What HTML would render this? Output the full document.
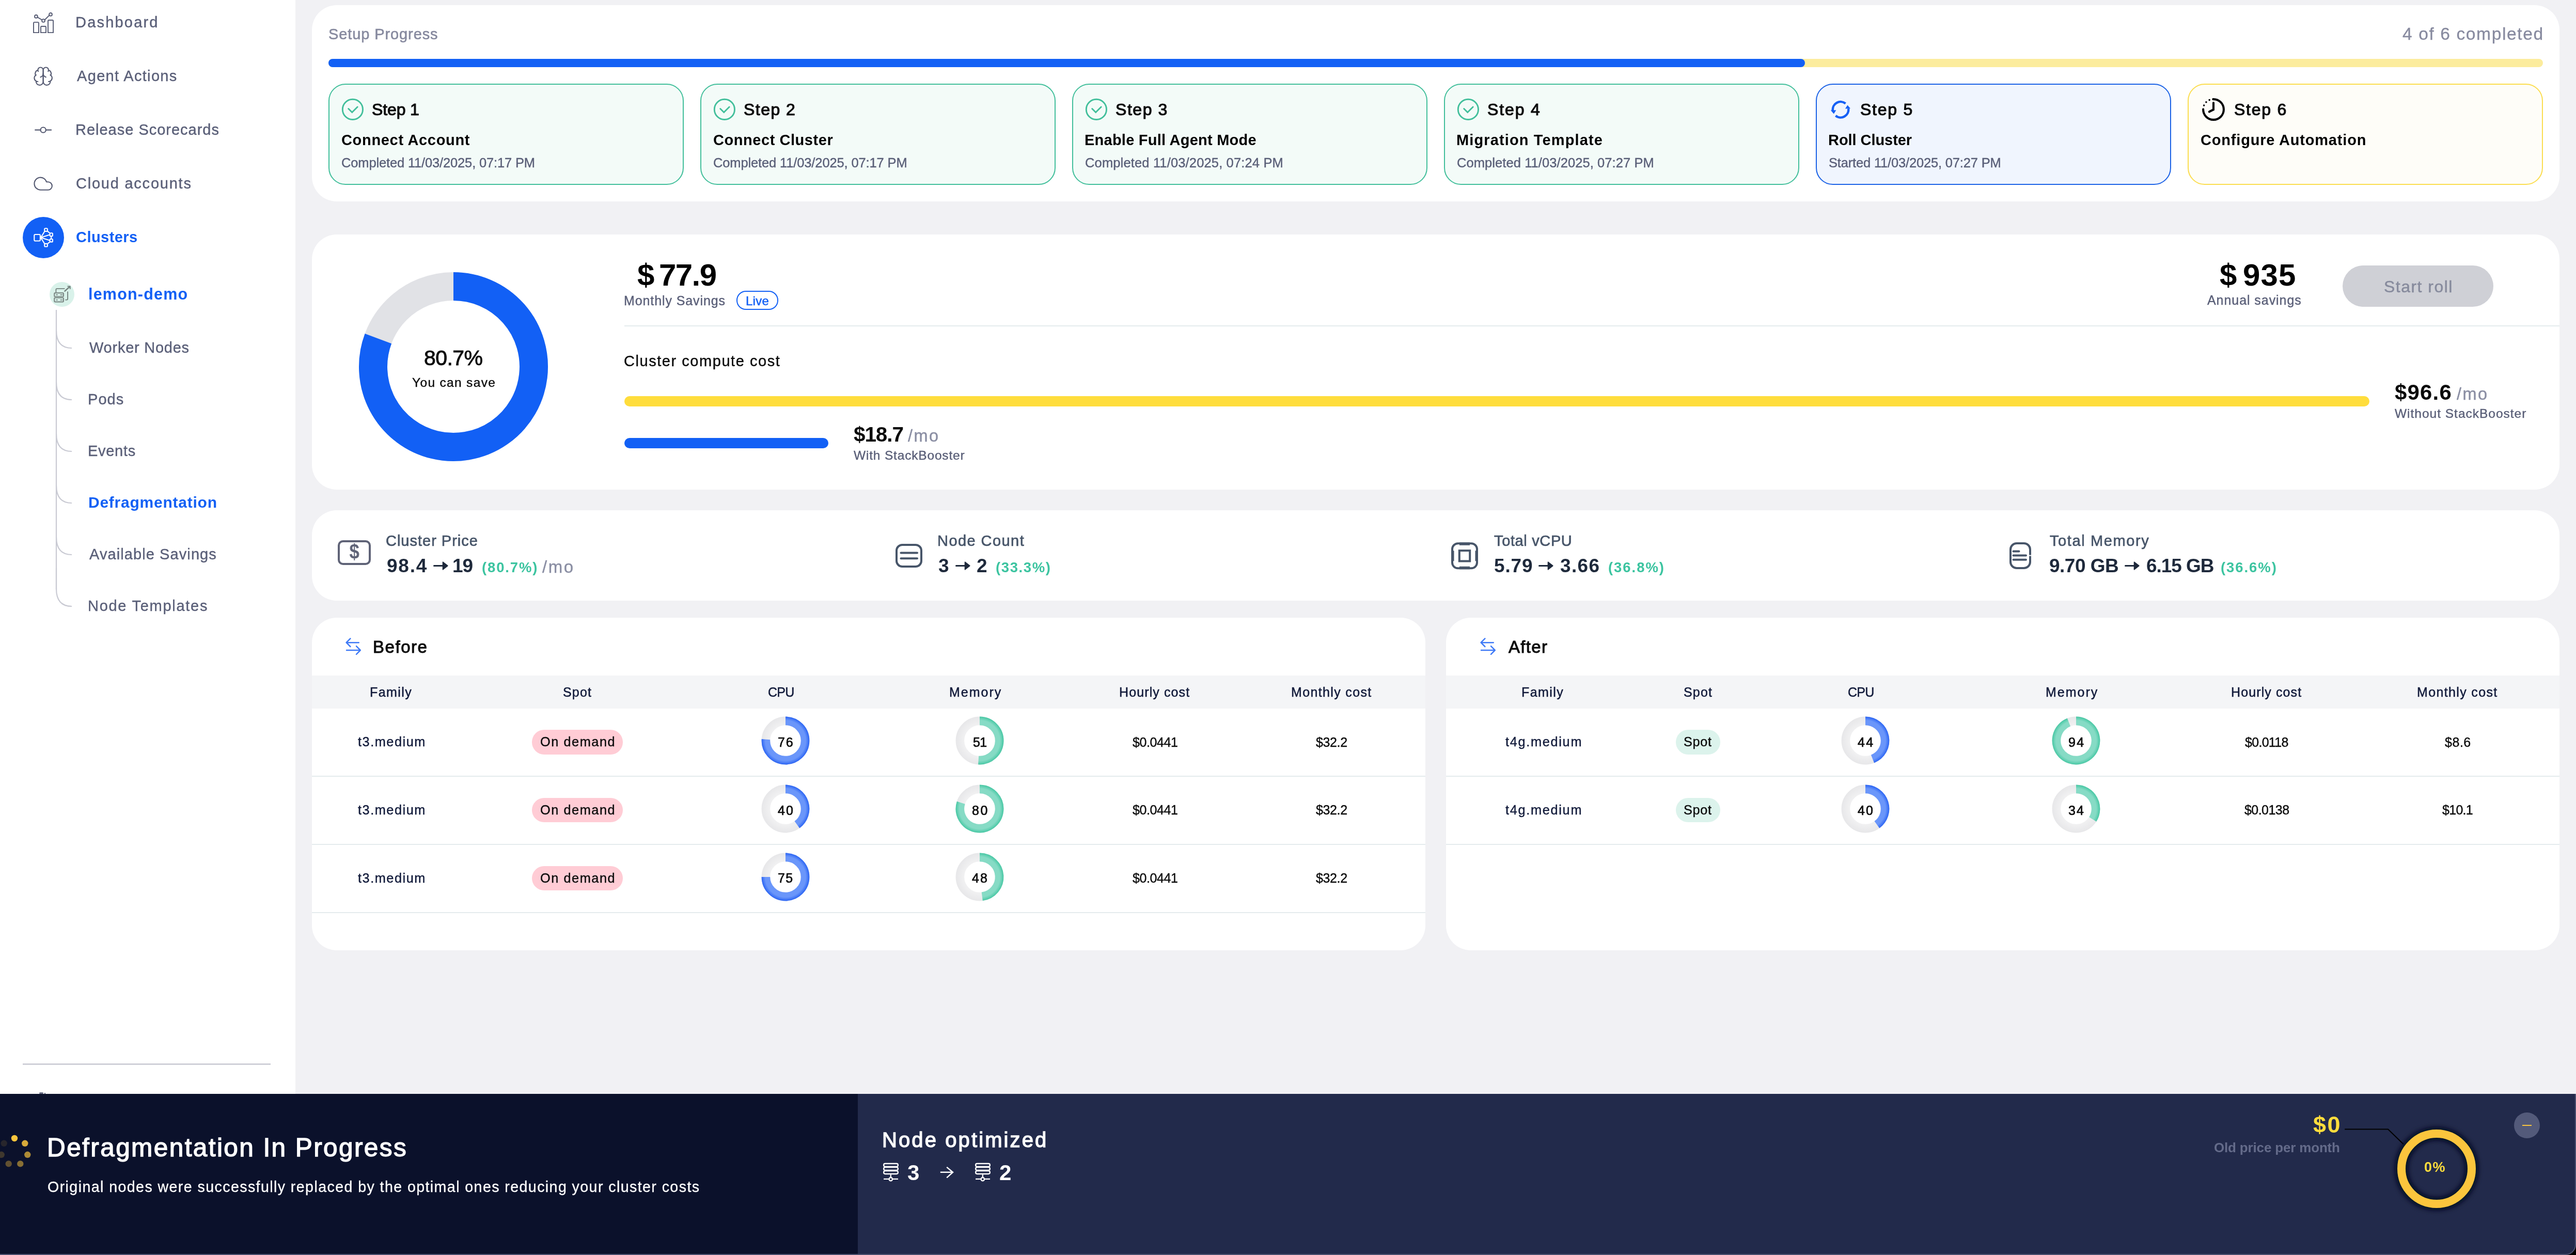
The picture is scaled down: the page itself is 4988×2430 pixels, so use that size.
<!DOCTYPE html>
<html><head><meta charset="utf-8"><title>Defragmentation</title>
<style>
html,body{margin:0;padding:0}
body{width:4988px;height:2430px;overflow:hidden;position:relative;background:#f1f1f4;font-family:"Liberation Sans",sans-serif}
.t{position:absolute;white-space:nowrap;will-change:transform}
.b{position:absolute;box-sizing:border-box}
</style></head><body>
<div class="b" style="left:0px;top:0px;width:572px;height:2118px;background:#ffffff;"></div>
<div class="t" style="left:146.2px;top:29.4px;font-size:29px;line-height:29px;color:#5a5f78;letter-spacing:2.20px;-webkit-text-stroke:0.4px #5a5f78;">Dashboard</div>
<div class="t" style="left:148.5px;top:133.3px;font-size:29px;line-height:29px;color:#5a5f78;letter-spacing:1.33px;-webkit-text-stroke:0.4px #5a5f78;">Agent Actions</div>
<div class="t" style="left:146.2px;top:237.3px;font-size:29px;line-height:29px;color:#5a5f78;letter-spacing:0.99px;-webkit-text-stroke:0.4px #5a5f78;">Release Scorecards</div>
<div class="t" style="left:147.1px;top:341.3px;font-size:29px;line-height:29px;color:#5a5f78;letter-spacing:1.77px;-webkit-text-stroke:0.4px #5a5f78;">Cloud accounts</div>
<div class="t" style="left:147.2px;top:445.3px;font-size:29px;line-height:29px;color:#1260f5;font-weight:700;letter-spacing:0.45px;">Clusters</div>
<div class="t" style="left:171.1px;top:554.0px;font-size:30.5px;line-height:30.5px;color:#1260f5;font-weight:700;letter-spacing:1.21px;">lemon-demo</div>
<div class="t" style="left:172.6px;top:659.2px;font-size:29px;line-height:29px;color:#5a5f78;letter-spacing:0.75px;-webkit-text-stroke:0.4px #5a5f78;">Worker Nodes</div>
<div class="t" style="left:170.3px;top:759.2px;font-size:29px;line-height:29px;color:#5a5f78;letter-spacing:1.07px;-webkit-text-stroke:0.4px #5a5f78;">Pods</div>
<div class="t" style="left:170.3px;top:859.2px;font-size:29px;line-height:29px;color:#5a5f78;letter-spacing:0.71px;-webkit-text-stroke:0.4px #5a5f78;">Events</div>
<div class="t" style="left:170.5px;top:958.3px;font-size:30px;line-height:30px;color:#1260f5;font-weight:700;letter-spacing:0.76px;">Defragmentation</div>
<div class="t" style="left:172.6px;top:1059.2px;font-size:29px;line-height:29px;color:#5a5f78;letter-spacing:1.09px;-webkit-text-stroke:0.4px #5a5f78;">Available Savings</div>
<div class="t" style="left:170.3px;top:1159.2px;font-size:29px;line-height:29px;color:#5a5f78;letter-spacing:1.72px;-webkit-text-stroke:0.4px #5a5f78;">Node Templates</div>
<svg class="b" style="left:107px;top:600px;" width="40" height="580" viewBox="0 0 40 580"><g fill="none" stroke="#c9cad3" stroke-width="2.2"><path d="M2 0V554" /><path d="M2 40Q2 74 32 74" /><path d="M2 140Q2 174 32 174" /><path d="M2 240Q2 274 32 274" /><path d="M2 340Q2 374 32 374" /><path d="M2 440Q2 474 32 474" /><path d="M2 540Q2 574 32 574" /></g></svg>
<div class="b" style="left:100px;top:1141px;width:20px;height:40px;background:#ffffff;"></div>
<svg class="b" style="left:107px;top:1100px;" width="40" height="80" viewBox="0 0 40 80"><path d="M2 0V40Q2 74 32 74" fill="none" stroke="#c9cad3" stroke-width="2.2"/></svg>
<div class="b" style="left:44px;top:420px;width:80px;height:80px;background:#1260f5;border-radius:40px;"></div>
<div class="b" style="left:96px;top:546px;width:48px;height:48px;background:#d9f2ea;border-radius:24px;"></div>
<div class="b" style="left:75.5px;top:2115px;width:8px;height:3px;background:#6b6f85;border-radius:1.5px;"></div>
<div class="b" style="left:85.5px;top:2115.5px;width:2px;height:2.5px;background:#6b6f85;"></div>
<div class="b" style="left:44px;top:2059px;width:480px;height:3px;background:#cfd0d8;"></div>
<svg class="b" style="left:64px;top:24px;" width="40" height="40" viewBox="0 0 40 40"><g fill="none" stroke="#545971" stroke-width="1.900"><path d="M1 39.100V20.600q0-1.500 1.500-1.500h7q1.500 0 1.500 1.500V39.100z"/><path d="M15 39.100V28.500q0-1.500 1.500-1.500h7q1.500 0 1.500 1.500V39.100z"/><path d="M29 39.100V16.500q0-1.500 1.500-1.500h7.100q1.500 0 1.500 1.500V39.100z"/><circle cx="5.900" cy="7.900" r="2.900"/><circle cx="20" cy="16" r="2.900"/><circle cx="34" cy="3.900" r="2.900"/><path d="M8.500 9.400L17.400 14.500M22.500 14.500L31.500 5.600"/></g></svg>
<svg class="b" style="left:63.36px;top:127.36px;" width="43" height="43" viewBox="0 0 25 25"><g fill="none" stroke="#545971" stroke-width="1.220" stroke-linecap="round" stroke-linejoin="round"><path d="M12 5a3 3 0 1 0-5.997.125 4 4 0 0 0-2.526 5.770 4 4 0 0 0 .556 6.588A4 4 0 1 0 12 18Z"/><path d="M12 5a3 3 0 1 1 5.997.125 4 4 0 0 1 2.526 5.770 4 4 0 0 1-.556 6.588A4 4 0 1 1 12 18Z"/><path d="M15 13a4.500 4.500 0 0 1-3-4 4.500 4.500 0 0 1-3 4"/><path d="M17.599 6.500a3 3 0 0 0 .399-1.375"/><path d="M6.003 5.125A3 3 0 0 0 6.401 6.500"/><path d="M3.477 10.896a4 4 0 0 1 .585-.396"/><path d="M19.938 10.500a4 4 0 0 1 .585.396"/><path d="M6 18a4 4 0 0 1-1.967-.516"/><path d="M19.967 17.484A4 4 0 0 1 18 18"/></g></svg>
<svg class="b" style="left:63.36px;top:231.06px;" width="43" height="43" viewBox="0 0 25 25"><g fill="none" stroke="#545971" stroke-width="1.220" stroke-linecap="round" stroke-linejoin="round"><circle cx="12" cy="12" r="3"/><path d="M3 12h6M15 12h6"/></g></svg>
<svg class="b" style="left:63.4px;top:335.1px;" width="43" height="43" viewBox="0 0 25 25"><g fill="none" stroke="#545971" stroke-width="1.220" stroke-linecap="round" stroke-linejoin="round"><path d="M17.500 19H9a7 7 0 1 1 6.710-9h1.790a4.500 4.500 0 1 1 0 9Z"/></g></svg>
<svg class="b" style="left:64px;top:440px;" width="40" height="40" viewBox="0 0 40 40"><g fill="none" stroke="#fff" stroke-width="2.100" stroke-linejoin="round"><rect x="2.300" y="14" width="11.600" height="12.500" rx="2"/><rect x="22.200" y="2.200" width="5.700" height="5.700" rx="1.500"/><rect x="32.600" y="11.300" width="5.300" height="5.900" rx="1.500"/><rect x="32.600" y="22.800" width="5.300" height="5.600" rx="1.500"/><rect x="22.200" y="31.900" width="5.700" height="5.600" rx="1.500"/><path d="M14.900 20.100L22.300 8.300M14.900 20.100L32.300 14.400M14.900 20.100L32.300 25.600M14.900 20.100L22.300 31.700"/><path d="M28.300 7.900L32.600 11.500M35.200 17.200V22.800M32.600 28.300L28.300 31.900"/></g></svg>
<svg class="b" style="left:96px;top:546px;" width="48" height="48" viewBox="0 0 48 48"><g fill="none" stroke="#6f7b78" stroke-width="1.900" stroke-linejoin="round" opacity="0.95"><rect x="9.200" y="21.200" width="17.800" height="7.200" rx="1.200"/><rect x="9.200" y="30.600" width="17.800" height="7.900" rx="1.200"/><path d="M12.200 24.800H16M20.500 24.800H25.500M12.200 34.800H16M20.500 34.800H25.500" stroke-width="1.500"/><path d="M12.400 20V14.900Q12.400 12.900 14.400 12.900H29.400M35.100 18.400V32.600Q35.100 34.600 33.100 34.600H30.300"/><path d="M28.700 18.400L38.800 9.300" stroke-width="2.600"/><path d="M34.500 8.400H39.800V13.700"/></g></svg>
<div class="b" style="left:604px;top:10px;width:4352px;height:380px;background:#ffffff;border-radius:48px;"></div>
<div class="t" style="left:635.7px;top:51.6px;font-size:29px;line-height:29px;color:#878a9f;letter-spacing:0.90px;-webkit-text-stroke:0.6px #878a9f;">Setup Progress</div>
<div class="t" style="left:4651.9px;top:49.2px;font-size:33.6px;line-height:33.6px;color:#878a9f;letter-spacing:1.59px;-webkit-text-stroke:0.3px #878a9f;">4 of 6 completed</div>
<div class="b" style="left:636px;top:114px;width:4288px;height:16px;background:#fcec9d;border-radius:8px;"></div>
<div class="b" style="left:636px;top:114px;width:2859px;height:16px;background:#1260f5;border-radius:8px;"></div>
<div class="b" style="left:636px;top:162px;width:688px;height:195.6px;background:#f3fbf8;border-radius:33px;border:2px solid #42bf9b;"></div>
<svg class="b" style="left:661px;top:190px;" width="44" height="44" viewBox="0 0 44 44"><g fill="none" stroke="#42bf9b" stroke-width="2.9" stroke-linecap="round" stroke-linejoin="round"><circle cx="21.9" cy="21.9" r="19.6"/><path d="M13.700 20.500l7 7.100 10.500-10.600"/></g></svg>
<div class="t" style="left:720.1px;top:196.2px;font-size:32px;line-height:32px;color:#0b0b0b;letter-spacing:-0.12px;-webkit-text-stroke:1.1px #0b0b0b;">Step 1</div>
<div class="t" style="left:660.8px;top:257.2px;font-size:29px;line-height:29px;color:#000000;font-weight:700;letter-spacing:0.68px;">Connect Account</div>
<div class="t" style="left:660.9px;top:302.6px;font-size:25.5px;line-height:25.5px;color:#5a5f78;letter-spacing:-0.15px;-webkit-text-stroke:0.4px #5a5f78;">Completed 11/03/2025, 07:17 PM</div>
<div class="b" style="left:1356px;top:162px;width:688px;height:195.6px;background:#f3fbf8;border-radius:33px;border:2px solid #42bf9b;"></div>
<svg class="b" style="left:1381px;top:190px;" width="44" height="44" viewBox="0 0 44 44"><g fill="none" stroke="#42bf9b" stroke-width="2.9" stroke-linecap="round" stroke-linejoin="round"><circle cx="21.9" cy="21.9" r="19.6"/><path d="M13.700 20.500l7 7.100 10.500-10.600"/></g></svg>
<div class="t" style="left:1440.1px;top:196.2px;font-size:32px;line-height:32px;color:#0b0b0b;letter-spacing:1.45px;-webkit-text-stroke:1.1px #0b0b0b;">Step 2</div>
<div class="t" style="left:1380.8px;top:257.2px;font-size:29px;line-height:29px;color:#000000;font-weight:700;letter-spacing:0.55px;">Connect Cluster</div>
<div class="t" style="left:1380.9px;top:302.6px;font-size:25.5px;line-height:25.5px;color:#5a5f78;letter-spacing:-0.13px;-webkit-text-stroke:0.4px #5a5f78;">Completed 11/03/2025, 07:17 PM</div>
<div class="b" style="left:2076px;top:162px;width:688px;height:195.6px;background:#f3fbf8;border-radius:33px;border:2px solid #42bf9b;"></div>
<svg class="b" style="left:2101px;top:190px;" width="44" height="44" viewBox="0 0 44 44"><g fill="none" stroke="#42bf9b" stroke-width="2.9" stroke-linecap="round" stroke-linejoin="round"><circle cx="21.9" cy="21.9" r="19.6"/><path d="M13.700 20.500l7 7.100 10.500-10.600"/></g></svg>
<div class="t" style="left:2160.1px;top:196.2px;font-size:32px;line-height:32px;color:#0b0b0b;letter-spacing:1.55px;-webkit-text-stroke:1.1px #0b0b0b;">Step 3</div>
<div class="t" style="left:2100.1px;top:257.2px;font-size:29px;line-height:29px;color:#000000;font-weight:700;letter-spacing:0.24px;">Enable Full Agent Mode</div>
<div class="t" style="left:2100.9px;top:302.6px;font-size:25.5px;line-height:25.5px;color:#5a5f78;letter-spacing:0.15px;-webkit-text-stroke:0.4px #5a5f78;">Completed 11/03/2025, 07:24 PM</div>
<div class="b" style="left:2796px;top:162px;width:688px;height:195.6px;background:#f3fbf8;border-radius:33px;border:2px solid #42bf9b;"></div>
<svg class="b" style="left:2821px;top:190px;" width="44" height="44" viewBox="0 0 44 44"><g fill="none" stroke="#42bf9b" stroke-width="2.9" stroke-linecap="round" stroke-linejoin="round"><circle cx="21.9" cy="21.9" r="19.6"/><path d="M13.700 20.500l7 7.100 10.500-10.600"/></g></svg>
<div class="t" style="left:2880.1px;top:196.2px;font-size:32px;line-height:32px;color:#0b0b0b;letter-spacing:1.87px;-webkit-text-stroke:1.1px #0b0b0b;">Step 4</div>
<div class="t" style="left:2820.1px;top:257.2px;font-size:29px;line-height:29px;color:#000000;font-weight:700;letter-spacing:1.13px;">Migration Template</div>
<div class="t" style="left:2820.9px;top:302.6px;font-size:25.5px;line-height:25.5px;color:#5a5f78;letter-spacing:0.08px;-webkit-text-stroke:0.4px #5a5f78;">Completed 11/03/2025, 07:27 PM</div>
<div class="b" style="left:3516px;top:162px;width:688px;height:195.6px;background:#f0f5fe;border-radius:33px;border:2px solid #1b62e6;"></div>
<svg class="b" style="left:3530px;top:180px;" width="70" height="70" viewBox="0 0 70 70"><g fill="none" stroke="#1660f5" stroke-width="4.500"><path d="M43.570 20.490A15.200 15.200 0 0 0 18.900 34.200"/><path d="M24.430 44.100A15.200 15.200 0 0 0 49.100 30.200"/></g><path d="M14.800 33.500L25.400 33.200L20.900 40.400Z" fill="#1660f5"/><path d="M42.900 30.400L53 30.100L47.400 23.400Z" fill="#1660f5"/></svg>
<div class="t" style="left:3601.8px;top:196.2px;font-size:32px;line-height:32px;color:#0b0b0b;letter-spacing:1.76px;-webkit-text-stroke:1.1px #0b0b0b;">Step 5</div>
<div class="t" style="left:3540.1px;top:257.2px;font-size:29px;line-height:29px;color:#000000;font-weight:700;letter-spacing:-0.06px;">Roll Cluster</div>
<div class="t" style="left:3541.0px;top:302.6px;font-size:25.5px;line-height:25.5px;color:#5a5f78;letter-spacing:-0.17px;-webkit-text-stroke:0.4px #5a5f78;">Started 11/03/2025, 07:27 PM</div>
<div class="b" style="left:4236px;top:162px;width:688px;height:195.6px;background:#fefdf8;border-radius:33px;border:2px solid #fbdd4f;"></div>
<svg class="b" style="left:4250px;top:176px;" width="72" height="72" viewBox="0 0 72 72"><g fill="none" stroke="#000" stroke-width="4.100" stroke-linecap="round"><path d="M35.31 16.11A19.9 19.9 0 1 1 16.10 35.65"/><path d="M36 23V36.200L27.800 40.300" stroke-linejoin="miter"/></g><g fill="#000"><circle cx="28.19" cy="17.59" r="1.800"/><circle cx="21.93" cy="21.78" r="1.800"/><circle cx="17.62" cy="28.12" r="1.800"/></g></svg>
<div class="t" style="left:4325.8px;top:196.2px;font-size:32px;line-height:32px;color:#0b0b0b;letter-spacing:1.77px;-webkit-text-stroke:1.1px #0b0b0b;">Step 6</div>
<div class="t" style="left:4260.8px;top:257.2px;font-size:29px;line-height:29px;color:#000000;font-weight:700;letter-spacing:0.81px;">Configure Automation</div>
<div class="b" style="left:604px;top:454px;width:4352px;height:494px;background:#ffffff;border-radius:48px;"></div>
<svg class="b" style="left:680px;top:510px;" width="400" height="400" viewBox="0 0 400 400"><circle cx="198" cy="200" r="155.5" fill="none" stroke="#e1e2e6" stroke-width="55"/><path d="M198.00 44.50A155.5 155.5 0 1 1 52.35 145.54" fill="none" stroke="#1260f5" stroke-width="55"/></svg>
<div class="t" style="left:821.4px;top:673.4px;font-size:41px;line-height:41px;color:#0b0b0b;letter-spacing:-0.58px;-webkit-text-stroke:0.9px #0b0b0b;">80.7%</div>
<div class="t" style="left:798.2px;top:728.7px;font-size:24.5px;line-height:24.5px;color:#0b0b0b;letter-spacing:1.33px;-webkit-text-stroke:0.4px #0b0b0b;">You can save</div>
<div class="t" style="left:1234.2px;top:503.4px;font-size:60px;line-height:60px;color:#000000;font-weight:700;">$</div>
<div class="t" style="left:1276.1px;top:503.4px;font-size:60px;line-height:60px;color:#000000;font-weight:700;letter-spacing:-1.56px;">77.9</div>
<div class="t" style="left:1207.5px;top:569.6px;font-size:25px;line-height:25px;color:#5a5f78;letter-spacing:0.90px;-webkit-text-stroke:0.4px #5a5f78;">Monthly Savings</div>
<div class="b" style="left:1426px;top:563px;width:81px;height:36.6px;background:#ffffff;border-radius:18.3px;border:2px solid #1260f5;"></div>
<div class="t" style="left:1444.1px;top:570.7px;font-size:24px;line-height:24px;color:#1260f5;letter-spacing:0.24px;-webkit-text-stroke:0.5px #1260f5;">Live</div>
<div class="b" style="left:1209px;top:630px;width:3747px;height:2px;background:#e4ebed;"></div>
<div class="t" style="left:1208.1px;top:685.3px;font-size:29px;line-height:29px;color:#0b0b0b;letter-spacing:1.55px;-webkit-text-stroke:0.4px #0b0b0b;">Cluster compute cost</div>
<div class="b" style="left:1209px;top:767px;width:3379px;height:20px;background:#ffdd3c;border-radius:10px;"></div>
<div class="b" style="left:1209px;top:848px;width:395px;height:20px;background:#1260f5;border-radius:10px;"></div>
<div class="t" style="left:1652.8px;top:821.2px;font-size:40.5px;line-height:40.5px;color:#0b0b0b;font-weight:700;letter-spacing:-1.11px;">$18.7</div>
<div class="t" style="left:1758.1px;top:828.0px;font-size:32.5px;line-height:32.5px;color:#8a8ea3;letter-spacing:2.44px;-webkit-text-stroke:0.4px #8a8ea3;">/mo</div>
<div class="t" style="left:1652.5px;top:869.8px;font-size:24.5px;line-height:24.5px;color:#5a5f78;letter-spacing:0.82px;-webkit-text-stroke:0.4px #5a5f78;">With StackBooster</div>
<div class="t" style="left:4298.1px;top:503.4px;font-size:60px;line-height:60px;color:#000000;font-weight:700;">$</div>
<div class="t" style="left:4342.7px;top:503.4px;font-size:60px;line-height:60px;color:#000000;font-weight:700;letter-spacing:1.07px;">935</div>
<div class="t" style="left:4273.5px;top:569.3px;font-size:25px;line-height:25px;color:#5a5f78;letter-spacing:0.94px;-webkit-text-stroke:0.4px #5a5f78;">Annual savings</div>
<div class="b" style="left:4536px;top:514px;width:292px;height:80px;background:#cfd0d6;border-radius:40px;"></div>
<div class="t" style="left:4615.7px;top:538.7px;font-size:32px;line-height:32px;color:#878b9d;letter-spacing:1.47px;-webkit-text-stroke:0.5px #878b9d;">Start roll</div>
<div class="t" style="left:4637.4px;top:739.0px;font-size:42px;line-height:42px;color:#0b0b0b;font-weight:700;letter-spacing:1.17px;">$96.6</div>
<div class="t" style="left:4757.2px;top:747.1px;font-size:32.5px;line-height:32.5px;color:#8a8ea3;letter-spacing:2.39px;-webkit-text-stroke:0.4px #8a8ea3;">/mo</div>
<div class="t" style="left:4637.1px;top:789.2px;font-size:24.5px;line-height:24.5px;color:#5a5f78;letter-spacing:0.99px;-webkit-text-stroke:0.4px #5a5f78;">Without StackBooster</div>
<div class="b" style="left:604px;top:988px;width:4352px;height:175px;background:#ffffff;border-radius:48px;"></div>
<div class="t" style="left:747.4px;top:1033.3px;font-size:29px;line-height:29px;color:#475569;letter-spacing:0.99px;-webkit-text-stroke:0.7px #475569;">Cluster Price</div>
<div class="t" style="left:748.6px;top:1077.4px;font-size:37px;line-height:37px;color:#1e293b;font-weight:700;letter-spacing:1.76px;">98.4</div>
<svg class="b" style="left:838.5px;top:1086.2px;" width="30" height="19" viewBox="0 0 30 19"><path d="M1.500 9.500H24" fill="none" stroke="#1e293b" stroke-width="3" stroke-linecap="round"/><path d="M18.500 2.200L27.800 9.500L18.500 16.800Z" fill="#1e293b" stroke="#1e293b" stroke-width="1.600" stroke-linejoin="round"/></svg>
<div class="t" style="left:875.6px;top:1077.4px;font-size:37px;line-height:37px;color:#1e293b;font-weight:700;letter-spacing:-1.04px;">19</div>
<div class="t" style="left:932.5px;top:1085.4px;font-size:27.5px;line-height:27.5px;color:#3cc4a0;font-weight:700;letter-spacing:1.84px;">(80.7%)</div>
<div class="t" style="left:1049.5px;top:1080.8px;font-size:33px;line-height:33px;color:#8a8ea3;letter-spacing:2.49px;-webkit-text-stroke:0.4px #8a8ea3;">/mo</div>
<div class="t" style="left:1815.4px;top:1033.3px;font-size:29px;line-height:29px;color:#475569;letter-spacing:1.44px;-webkit-text-stroke:0.7px #475569;">Node Count</div>
<div class="t" style="left:1816.6px;top:1077.4px;font-size:37px;line-height:37px;color:#1e293b;font-weight:700;">3</div>
<svg class="b" style="left:1849.5px;top:1086.2px;" width="30" height="19" viewBox="0 0 30 19"><path d="M1.500 9.500H24" fill="none" stroke="#1e293b" stroke-width="3" stroke-linecap="round"/><path d="M18.500 2.200L27.800 9.500L18.500 16.800Z" fill="#1e293b" stroke="#1e293b" stroke-width="1.600" stroke-linejoin="round"/></svg>
<div class="t" style="left:1890.5px;top:1077.4px;font-size:37px;line-height:37px;color:#1e293b;font-weight:700;">2</div>
<div class="t" style="left:1928.2px;top:1085.4px;font-size:27.5px;line-height:27.5px;color:#3cc4a0;font-weight:700;letter-spacing:1.62px;">(33.3%)</div>
<div class="t" style="left:2893.3px;top:1033.3px;font-size:29px;line-height:29px;color:#475569;letter-spacing:0.64px;-webkit-text-stroke:0.7px #475569;">Total vCPU</div>
<div class="t" style="left:2892.5px;top:1077.4px;font-size:37px;line-height:37px;color:#1e293b;font-weight:700;letter-spacing:0.83px;">5.79</div>
<svg class="b" style="left:2978.7px;top:1086.2px;" width="30" height="19" viewBox="0 0 30 19"><path d="M1.500 9.500H24" fill="none" stroke="#1e293b" stroke-width="3" stroke-linecap="round"/><path d="M18.500 2.200L27.800 9.500L18.500 16.800Z" fill="#1e293b" stroke="#1e293b" stroke-width="1.600" stroke-linejoin="round"/></svg>
<div class="t" style="left:3020.5px;top:1077.4px;font-size:37px;line-height:37px;color:#1e293b;font-weight:700;letter-spacing:1.36px;">3.66</div>
<div class="t" style="left:3114.2px;top:1085.4px;font-size:27.5px;line-height:27.5px;color:#3cc4a0;font-weight:700;letter-spacing:1.94px;">(36.8%)</div>
<div class="t" style="left:3968.9px;top:1033.3px;font-size:29px;line-height:29px;color:#475569;letter-spacing:1.61px;-webkit-text-stroke:0.7px #475569;">Total Memory</div>
<div class="t" style="left:3967.9px;top:1077.4px;font-size:37px;line-height:37px;color:#1e293b;font-weight:700;letter-spacing:-0.51px;">9.70 GB</div>
<svg class="b" style="left:4113.5px;top:1086.2px;" width="30" height="19" viewBox="0 0 30 19"><path d="M1.500 9.500H24" fill="none" stroke="#1e293b" stroke-width="3" stroke-linecap="round"/><path d="M18.500 2.200L27.800 9.500L18.500 16.800Z" fill="#1e293b" stroke="#1e293b" stroke-width="1.600" stroke-linejoin="round"/></svg>
<div class="t" style="left:4156.2px;top:1077.4px;font-size:37px;line-height:37px;color:#1e293b;font-weight:700;letter-spacing:-1.04px;">6.15 GB</div>
<div class="t" style="left:4300.2px;top:1085.4px;font-size:27.5px;line-height:27.5px;color:#3cc4a0;font-weight:700;letter-spacing:1.92px;">(36.6%)</div>
<svg class="b" style="left:652px;top:1044px;" width="68" height="52" viewBox="0 0 68 52"><rect x="4" y="4" width="60" height="44" rx="8" fill="none" stroke="#5f6377" stroke-width="4"/></svg>
<div class="t" style="left:674.9px;top:1047.5px;font-size:40px;line-height:40px;color:#5f6377;font-weight:700;transform:scaleX(.87);">$</div>
<svg class="b" style="left:1732px;top:1051px;" width="56" height="50" viewBox="0 0 56 50"><g fill="none" stroke="#475569" stroke-width="4" stroke-linecap="round"><rect x="4" y="4" width="48" height="42" rx="11"/><path d="M12.500 19.600H44M12.500 30.300H44"/></g></svg>
<svg class="b" style="left:2808px;top:1048px;" width="56" height="56" viewBox="0 0 56 56"><g fill="none" stroke="#475569" stroke-width="4"><rect x="4" y="4.300" width="48" height="48" rx="11"/><rect x="17.800" y="18.100" width="20.400" height="20.400"/></g><g fill="#475569"><rect x="18" y="2.300" width="20" height="5.500"/><rect x="18" y="48.800" width="20" height="5.500"/><rect x="2" y="18.300" width="5.500" height="20"/><rect x="48.500" y="18.300" width="5.500" height="20"/></g></svg>
<svg class="b" style="left:3889px;top:1048px;" width="48" height="58" viewBox="0 0 48 58"><g fill="none" stroke="#475569" stroke-width="4" stroke-linecap="round"><rect x="4" y="4" width="38" height="48" rx="12"/><path d="M9.500 19.400H20.500M9.500 27.500H34M9.500 35.700H34"/></g><rect x="39" y="26.700" width="6" height="1.800" fill="#fff"/></svg>
<div class="b" style="left:604px;top:1196px;width:2156px;height:644px;background:#ffffff;border-radius:48px;"></div>
<svg class="b" style="left:668px;top:1234px;" width="34" height="36" viewBox="0 0 34 36"><g fill="none" stroke="#3f7af6" stroke-width="2.500" stroke-linecap="round" stroke-linejoin="round"><path d="M26.800 10.200H2.600M10.400 2.400L2.600 10.200l7.800 7.800"/><path d="M3 25H29.800M22 17.200l7.800 7.800-7.800 7.800"/></g></svg>
<div class="t" style="left:722.2px;top:1236.0px;font-size:33px;line-height:33px;color:#0b0b0b;letter-spacing:1.55px;-webkit-text-stroke:1.0px #0b0b0b;">Before</div>
<div class="b" style="left:604px;top:1308px;width:2156px;height:63.7px;background:#f4f5f7;"></div>
<div class="t" style="left:715.8px;top:1327.8px;font-size:25px;line-height:25px;color:#111a3a;letter-spacing:1.42px;-webkit-text-stroke:0.5px #111a3a;">Family</div>
<div class="t" style="left:1090.0px;top:1327.8px;font-size:25px;line-height:25px;color:#111a3a;letter-spacing:1.20px;-webkit-text-stroke:0.5px #111a3a;">Spot</div>
<div class="t" style="left:1486.9px;top:1327.8px;font-size:25px;line-height:25px;color:#111a3a;letter-spacing:-0.70px;-webkit-text-stroke:0.5px #111a3a;">CPU</div>
<div class="t" style="left:1837.9px;top:1327.8px;font-size:25px;line-height:25px;color:#111a3a;letter-spacing:1.98px;-webkit-text-stroke:0.5px #111a3a;">Memory</div>
<div class="t" style="left:2167.4px;top:1327.8px;font-size:25px;line-height:25px;color:#111a3a;letter-spacing:1.11px;-webkit-text-stroke:0.5px #111a3a;">Hourly cost</div>
<div class="t" style="left:2499.5px;top:1327.8px;font-size:25px;line-height:25px;color:#111a3a;letter-spacing:1.35px;-webkit-text-stroke:0.5px #111a3a;">Monthly cost</div>
<div class="b" style="left:604px;top:1502.2px;width:2156px;height:2px;background:#e4ebed;"></div>
<div class="t" style="left:692.7px;top:1424.3px;font-size:25.3px;line-height:25.3px;color:#111a3a;letter-spacing:1.53px;-webkit-text-stroke:0.4px #111a3a;">t3.medium</div>
<div class="b" style="left:1030.2px;top:1413.2px;width:175.7px;height:47.4px;background:#ffccd5;border-radius:23.7px;"></div>
<div class="t" style="left:1045.6px;top:1424.3px;font-size:25.3px;line-height:25.3px;color:#0b0b0b;letter-spacing:1.56px;-webkit-text-stroke:0.4px #0b0b0b;">On demand</div>
<svg class="b" style="left:1470.7px;top:1384.1000000000001px;" width="100" height="100" viewBox="0 0 100 100"><defs><radialGradient id="g1520_1434" cx="50" cy="50" r="46.5" gradientUnits="userSpaceOnUse"><stop offset="0.64" stop-color="#6a96fa"/><stop offset="0.84" stop-color="#6a96fa"/><stop offset="1" stop-color="#2a64f4"/></radialGradient><radialGradient id="g1520_1434b" cx="50" cy="50" r="46.5" gradientUnits="userSpaceOnUse"><stop offset="0.64" stop-color="#f1f1f2"/><stop offset="1" stop-color="#e7e7e9"/></radialGradient></defs><circle cx="50" cy="50" r="38.1" fill="none" stroke="url(#g1520_1434b)" stroke-width="16.6"/><path d="M50.00 11.90A38.1 38.1 0 1 1 11.98 47.61" fill="none" stroke="url(#g1520_1434)" stroke-width="16.6"/></svg>
<div class="t" style="left:1505.8px;top:1424.7px;font-size:25px;line-height:25px;color:#0b0b0b;letter-spacing:1.77px;-webkit-text-stroke:0.7px #0b0b0b;">76</div>
<svg class="b" style="left:1847.1px;top:1384.1000000000001px;" width="100" height="100" viewBox="0 0 100 100"><defs><radialGradient id="g1897_1434" cx="50" cy="50" r="46.5" gradientUnits="userSpaceOnUse"><stop offset="0.64" stop-color="#86dbc5"/><stop offset="0.84" stop-color="#86dbc5"/><stop offset="1" stop-color="#47c8a4"/></radialGradient><radialGradient id="g1897_1434b" cx="50" cy="50" r="46.5" gradientUnits="userSpaceOnUse"><stop offset="0.64" stop-color="#f1f1f2"/><stop offset="1" stop-color="#e7e7e9"/></radialGradient></defs><circle cx="50" cy="50" r="38.1" fill="none" stroke="url(#g1897_1434b)" stroke-width="16.6"/><path d="M50.00 11.90A38.1 38.1 0 1 1 47.61 88.02" fill="none" stroke="url(#g1897_1434)" stroke-width="16.6"/></svg>
<div class="t" style="left:1883.7px;top:1424.7px;font-size:25px;line-height:25px;color:#0b0b0b;letter-spacing:-0.70px;-webkit-text-stroke:0.7px #0b0b0b;">51</div>
<div class="t" style="left:2192.9px;top:1424.5px;font-size:25px;line-height:25px;color:#0b0b0b;letter-spacing:-0.40px;-webkit-text-stroke:0.4px #0b0b0b;">$0.0441</div>
<div class="t" style="left:2548.0px;top:1424.5px;font-size:25px;line-height:25px;color:#0b0b0b;letter-spacing:-0.38px;-webkit-text-stroke:0.4px #0b0b0b;">$32.2</div>
<div class="b" style="left:604px;top:1634.0px;width:2156px;height:2px;background:#e4ebed;"></div>
<div class="t" style="left:692.7px;top:1556.1px;font-size:25.3px;line-height:25.3px;color:#111a3a;letter-spacing:1.53px;-webkit-text-stroke:0.4px #111a3a;">t3.medium</div>
<div class="b" style="left:1030.2px;top:1545.0px;width:175.7px;height:47.4px;background:#ffccd5;border-radius:23.7px;"></div>
<div class="t" style="left:1045.6px;top:1556.1px;font-size:25.3px;line-height:25.3px;color:#0b0b0b;letter-spacing:1.56px;-webkit-text-stroke:0.4px #0b0b0b;">On demand</div>
<svg class="b" style="left:1470.7px;top:1515.9px;" width="100" height="100" viewBox="0 0 100 100"><defs><radialGradient id="g1520_1565" cx="50" cy="50" r="46.5" gradientUnits="userSpaceOnUse"><stop offset="0.64" stop-color="#6a96fa"/><stop offset="0.84" stop-color="#6a96fa"/><stop offset="1" stop-color="#2a64f4"/></radialGradient><radialGradient id="g1520_1565b" cx="50" cy="50" r="46.5" gradientUnits="userSpaceOnUse"><stop offset="0.64" stop-color="#f1f1f2"/><stop offset="1" stop-color="#e7e7e9"/></radialGradient></defs><circle cx="50" cy="50" r="38.1" fill="none" stroke="url(#g1520_1565b)" stroke-width="16.6"/><path d="M50.00 11.90A38.1 38.1 0 0 1 72.39 80.82" fill="none" stroke="url(#g1520_1565)" stroke-width="16.6"/></svg>
<div class="t" style="left:1506.0px;top:1556.5px;font-size:25px;line-height:25px;color:#0b0b0b;letter-spacing:2.04px;-webkit-text-stroke:0.7px #0b0b0b;">40</div>
<svg class="b" style="left:1847.1px;top:1515.9px;" width="100" height="100" viewBox="0 0 100 100"><defs><radialGradient id="g1897_1565" cx="50" cy="50" r="46.5" gradientUnits="userSpaceOnUse"><stop offset="0.64" stop-color="#86dbc5"/><stop offset="0.84" stop-color="#86dbc5"/><stop offset="1" stop-color="#47c8a4"/></radialGradient><radialGradient id="g1897_1565b" cx="50" cy="50" r="46.5" gradientUnits="userSpaceOnUse"><stop offset="0.64" stop-color="#f1f1f2"/><stop offset="1" stop-color="#e7e7e9"/></radialGradient></defs><circle cx="50" cy="50" r="38.1" fill="none" stroke="url(#g1897_1565b)" stroke-width="16.6"/><path d="M50.00 11.90A38.1 38.1 0 1 1 13.76 38.23" fill="none" stroke="url(#g1897_1565)" stroke-width="16.6"/></svg>
<div class="t" style="left:1881.9px;top:1556.5px;font-size:25px;line-height:25px;color:#0b0b0b;letter-spacing:2.55px;-webkit-text-stroke:0.7px #0b0b0b;">80</div>
<div class="t" style="left:2192.9px;top:1556.3px;font-size:25px;line-height:25px;color:#0b0b0b;letter-spacing:-0.40px;-webkit-text-stroke:0.4px #0b0b0b;">$0.0441</div>
<div class="t" style="left:2548.0px;top:1556.3px;font-size:25px;line-height:25px;color:#0b0b0b;letter-spacing:-0.38px;-webkit-text-stroke:0.4px #0b0b0b;">$32.2</div>
<div class="b" style="left:604px;top:1765.8000000000002px;width:2156px;height:2px;background:#e4ebed;"></div>
<div class="t" style="left:692.7px;top:1687.9px;font-size:25.3px;line-height:25.3px;color:#111a3a;letter-spacing:1.53px;-webkit-text-stroke:0.4px #111a3a;">t3.medium</div>
<div class="b" style="left:1030.2px;top:1676.8000000000002px;width:175.7px;height:47.4px;background:#ffccd5;border-radius:23.7px;"></div>
<div class="t" style="left:1045.6px;top:1687.9px;font-size:25.3px;line-height:25.3px;color:#0b0b0b;letter-spacing:1.56px;-webkit-text-stroke:0.4px #0b0b0b;">On demand</div>
<svg class="b" style="left:1470.7px;top:1647.7000000000003px;" width="100" height="100" viewBox="0 0 100 100"><defs><radialGradient id="g1520_1697" cx="50" cy="50" r="46.5" gradientUnits="userSpaceOnUse"><stop offset="0.64" stop-color="#6a96fa"/><stop offset="0.84" stop-color="#6a96fa"/><stop offset="1" stop-color="#2a64f4"/></radialGradient><radialGradient id="g1520_1697b" cx="50" cy="50" r="46.5" gradientUnits="userSpaceOnUse"><stop offset="0.64" stop-color="#f1f1f2"/><stop offset="1" stop-color="#e7e7e9"/></radialGradient></defs><circle cx="50" cy="50" r="38.1" fill="none" stroke="url(#g1520_1697b)" stroke-width="16.6"/><path d="M50.00 11.90A38.1 38.1 0 1 1 11.90 50.00" fill="none" stroke="url(#g1520_1697)" stroke-width="16.6"/></svg>
<div class="t" style="left:1506.0px;top:1688.3px;font-size:25px;line-height:25px;color:#0b0b0b;letter-spacing:1.32px;-webkit-text-stroke:0.7px #0b0b0b;">75</div>
<svg class="b" style="left:1847.1px;top:1647.7000000000003px;" width="100" height="100" viewBox="0 0 100 100"><defs><radialGradient id="g1897_1697" cx="50" cy="50" r="46.5" gradientUnits="userSpaceOnUse"><stop offset="0.64" stop-color="#86dbc5"/><stop offset="0.84" stop-color="#86dbc5"/><stop offset="1" stop-color="#47c8a4"/></radialGradient><radialGradient id="g1897_1697b" cx="50" cy="50" r="46.5" gradientUnits="userSpaceOnUse"><stop offset="0.64" stop-color="#f1f1f2"/><stop offset="1" stop-color="#e7e7e9"/></radialGradient></defs><circle cx="50" cy="50" r="38.1" fill="none" stroke="url(#g1897_1697b)" stroke-width="16.6"/><path d="M50.00 11.90A38.1 38.1 0 0 1 54.78 87.80" fill="none" stroke="url(#g1897_1697)" stroke-width="16.6"/></svg>
<div class="t" style="left:1882.4px;top:1688.3px;font-size:25px;line-height:25px;color:#0b0b0b;letter-spacing:2.15px;-webkit-text-stroke:0.7px #0b0b0b;">48</div>
<div class="t" style="left:2192.9px;top:1688.1px;font-size:25px;line-height:25px;color:#0b0b0b;letter-spacing:-0.40px;-webkit-text-stroke:0.4px #0b0b0b;">$0.0441</div>
<div class="t" style="left:2548.0px;top:1688.1px;font-size:25px;line-height:25px;color:#0b0b0b;letter-spacing:-0.38px;-webkit-text-stroke:0.4px #0b0b0b;">$32.2</div>
<div class="b" style="left:2800px;top:1196px;width:2156px;height:644px;background:#ffffff;border-radius:48px;"></div>
<svg class="b" style="left:2864.5px;top:1234px;" width="34" height="36" viewBox="0 0 34 36"><g fill="none" stroke="#3f7af6" stroke-width="2.500" stroke-linecap="round" stroke-linejoin="round"><path d="M26.800 10.200H2.600M10.400 2.400L2.600 10.200l7.800 7.800"/><path d="M3 25H29.800M22 17.200l7.800 7.800-7.800 7.800"/></g></svg>
<div class="t" style="left:2921.3px;top:1236.0px;font-size:33px;line-height:33px;color:#0b0b0b;letter-spacing:1.31px;-webkit-text-stroke:1.0px #0b0b0b;">After</div>
<div class="b" style="left:2800px;top:1308px;width:2156px;height:63.7px;background:#f4f5f7;"></div>
<div class="t" style="left:2946.2px;top:1327.8px;font-size:25px;line-height:25px;color:#111a3a;letter-spacing:1.42px;-webkit-text-stroke:0.5px #111a3a;">Family</div>
<div class="t" style="left:3259.8px;top:1327.8px;font-size:25px;line-height:25px;color:#111a3a;letter-spacing:1.20px;-webkit-text-stroke:0.5px #111a3a;">Spot</div>
<div class="t" style="left:3578.3px;top:1327.8px;font-size:25px;line-height:25px;color:#111a3a;letter-spacing:-0.70px;-webkit-text-stroke:0.5px #111a3a;">CPU</div>
<div class="t" style="left:3960.9px;top:1327.8px;font-size:25px;line-height:25px;color:#111a3a;letter-spacing:1.98px;-webkit-text-stroke:0.5px #111a3a;">Memory</div>
<div class="t" style="left:4319.6px;top:1327.8px;font-size:25px;line-height:25px;color:#111a3a;letter-spacing:1.11px;-webkit-text-stroke:0.5px #111a3a;">Hourly cost</div>
<div class="t" style="left:4680.3px;top:1327.8px;font-size:25px;line-height:25px;color:#111a3a;letter-spacing:1.35px;-webkit-text-stroke:0.5px #111a3a;">Monthly cost</div>
<div class="b" style="left:2800px;top:1502.2px;width:2156px;height:2px;background:#e4ebed;"></div>
<div class="t" style="left:2914.5px;top:1424.3px;font-size:25.3px;line-height:25.3px;color:#111a3a;letter-spacing:1.70px;-webkit-text-stroke:0.4px #111a3a;">t4g.medium</div>
<div class="b" style="left:3245.0px;top:1413.2px;width:85.6px;height:47.4px;background:#dcf3ec;border-radius:23.7px;"></div>
<div class="t" style="left:3260.3px;top:1424.3px;font-size:25.3px;line-height:25.3px;color:#0b0b0b;letter-spacing:0.66px;-webkit-text-stroke:0.4px #0b0b0b;">Spot</div>
<svg class="b" style="left:3562.1px;top:1384.1000000000001px;" width="100" height="100" viewBox="0 0 100 100"><defs><radialGradient id="g3612_1434" cx="50" cy="50" r="46.5" gradientUnits="userSpaceOnUse"><stop offset="0.64" stop-color="#6a96fa"/><stop offset="0.84" stop-color="#6a96fa"/><stop offset="1" stop-color="#2a64f4"/></radialGradient><radialGradient id="g3612_1434b" cx="50" cy="50" r="46.5" gradientUnits="userSpaceOnUse"><stop offset="0.64" stop-color="#f1f1f2"/><stop offset="1" stop-color="#e7e7e9"/></radialGradient></defs><circle cx="50" cy="50" r="38.1" fill="none" stroke="url(#g3612_1434b)" stroke-width="16.6"/><path d="M50.00 11.90A38.1 38.1 0 0 1 64.03 85.42" fill="none" stroke="url(#g3612_1434)" stroke-width="16.6"/></svg>
<div class="t" style="left:3597.1px;top:1424.7px;font-size:25px;line-height:25px;color:#0b0b0b;letter-spacing:2.30px;-webkit-text-stroke:0.7px #0b0b0b;">44</div>
<svg class="b" style="left:3970.1px;top:1384.1000000000001px;" width="100" height="100" viewBox="0 0 100 100"><defs><radialGradient id="g4020_1434" cx="50" cy="50" r="46.5" gradientUnits="userSpaceOnUse"><stop offset="0.64" stop-color="#86dbc5"/><stop offset="0.84" stop-color="#86dbc5"/><stop offset="1" stop-color="#47c8a4"/></radialGradient><radialGradient id="g4020_1434b" cx="50" cy="50" r="46.5" gradientUnits="userSpaceOnUse"><stop offset="0.64" stop-color="#f1f1f2"/><stop offset="1" stop-color="#e7e7e9"/></radialGradient></defs><circle cx="50" cy="50" r="38.1" fill="none" stroke="url(#g4020_1434b)" stroke-width="16.6"/><path d="M50.00 11.90A38.1 38.1 0 1 1 35.97 14.58" fill="none" stroke="url(#g4020_1434)" stroke-width="16.6"/></svg>
<div class="t" style="left:4004.8px;top:1424.7px;font-size:25px;line-height:25px;color:#0b0b0b;letter-spacing:2.40px;-webkit-text-stroke:0.7px #0b0b0b;">94</div>
<div class="t" style="left:4346.9px;top:1424.5px;font-size:25px;line-height:25px;color:#0b0b0b;letter-spacing:-0.70px;-webkit-text-stroke:0.4px #0b0b0b;">$0.0118</div>
<div class="t" style="left:4734.1px;top:1424.5px;font-size:25px;line-height:25px;color:#0b0b0b;letter-spacing:0.54px;-webkit-text-stroke:0.4px #0b0b0b;">$8.6</div>
<div class="b" style="left:2800px;top:1634.0px;width:2156px;height:2px;background:#e4ebed;"></div>
<div class="t" style="left:2914.5px;top:1556.1px;font-size:25.3px;line-height:25.3px;color:#111a3a;letter-spacing:1.70px;-webkit-text-stroke:0.4px #111a3a;">t4g.medium</div>
<div class="b" style="left:3245.0px;top:1545.0px;width:85.6px;height:47.4px;background:#dcf3ec;border-radius:23.7px;"></div>
<div class="t" style="left:3260.3px;top:1556.1px;font-size:25.3px;line-height:25.3px;color:#0b0b0b;letter-spacing:0.66px;-webkit-text-stroke:0.4px #0b0b0b;">Spot</div>
<svg class="b" style="left:3562.1px;top:1515.9px;" width="100" height="100" viewBox="0 0 100 100"><defs><radialGradient id="g3612_1565" cx="50" cy="50" r="46.5" gradientUnits="userSpaceOnUse"><stop offset="0.64" stop-color="#6a96fa"/><stop offset="0.84" stop-color="#6a96fa"/><stop offset="1" stop-color="#2a64f4"/></radialGradient><radialGradient id="g3612_1565b" cx="50" cy="50" r="46.5" gradientUnits="userSpaceOnUse"><stop offset="0.64" stop-color="#f1f1f2"/><stop offset="1" stop-color="#e7e7e9"/></radialGradient></defs><circle cx="50" cy="50" r="38.1" fill="none" stroke="url(#g3612_1565b)" stroke-width="16.6"/><path d="M50.00 11.90A38.1 38.1 0 0 1 72.39 80.82" fill="none" stroke="url(#g3612_1565)" stroke-width="16.6"/></svg>
<div class="t" style="left:3597.4px;top:1556.5px;font-size:25px;line-height:25px;color:#0b0b0b;letter-spacing:2.04px;-webkit-text-stroke:0.7px #0b0b0b;">40</div>
<svg class="b" style="left:3970.1px;top:1515.9px;" width="100" height="100" viewBox="0 0 100 100"><defs><radialGradient id="g4020_1565" cx="50" cy="50" r="46.5" gradientUnits="userSpaceOnUse"><stop offset="0.64" stop-color="#86dbc5"/><stop offset="0.84" stop-color="#86dbc5"/><stop offset="1" stop-color="#47c8a4"/></radialGradient><radialGradient id="g4020_1565b" cx="50" cy="50" r="46.5" gradientUnits="userSpaceOnUse"><stop offset="0.64" stop-color="#f1f1f2"/><stop offset="1" stop-color="#e7e7e9"/></radialGradient></defs><circle cx="50" cy="50" r="38.1" fill="none" stroke="url(#g4020_1565b)" stroke-width="16.6"/><path d="M50.00 11.90A38.1 38.1 0 0 1 82.17 70.42" fill="none" stroke="url(#g4020_1565)" stroke-width="16.6"/></svg>
<div class="t" style="left:4005.0px;top:1556.5px;font-size:25px;line-height:25px;color:#0b0b0b;letter-spacing:2.18px;-webkit-text-stroke:0.7px #0b0b0b;">34</div>
<div class="t" style="left:4345.5px;top:1556.3px;font-size:25px;line-height:25px;color:#0b0b0b;letter-spacing:-0.55px;-webkit-text-stroke:0.4px #0b0b0b;">$0.0138</div>
<div class="t" style="left:4729.4px;top:1556.3px;font-size:25px;line-height:25px;color:#0b0b0b;letter-spacing:-0.70px;-webkit-text-stroke:0.4px #0b0b0b;">$10.1</div>
<div class="b" style="left:4940px;top:2380px;width:48px;height:50px;background:#000;"></div>
<div class="b" style="left:0px;top:2118px;width:4988px;height:312px;background:transparent;border-bottom:2.500px solid #4d5271;border-right:2px solid #4d5271;border-bottom-right-radius:20px;background:linear-gradient(90deg,#0b112b 1661px,#222a4b 1661px);"></div>
<svg class="b" style="left:-12.2px;top:2190px;" width="80" height="80" viewBox="0 0 80 80"><circle cx="40.0" cy="14.0" r="6.200" fill="#fbc53d" opacity="1"/><circle cx="60.3" cy="23.8" r="6.200" fill="#fbc53d" opacity="0.85"/><circle cx="65.3" cy="45.8" r="6.200" fill="#fbc53d" opacity="0.68"/><circle cx="51.3" cy="63.4" r="6.200" fill="#fbc53d" opacity="0.52"/><circle cx="28.7" cy="63.4" r="6.200" fill="#fbc53d" opacity="0.36"/><circle cx="14.7" cy="45.8" r="6.200" fill="#fbc53d" opacity="0.22"/><circle cx="19.7" cy="23.8" r="6.200" fill="#fbc53d" opacity="0.12"/></svg>
<div class="t" style="left:90.8px;top:2196.7px;font-size:49.5px;line-height:49.5px;color:#ffffff;letter-spacing:2.42px;-webkit-text-stroke:1.4px #ffffff;">Defragmentation In Progress</div>
<div class="t" style="left:91.6px;top:2283.6px;font-size:28.6px;line-height:28.6px;color:#ffffff;letter-spacing:1.41px;-webkit-text-stroke:0.3px #ffffff;">Original nodes were successfully replaced by the optimal ones reducing your cluster costs</div>
<div class="t" style="left:1708.4px;top:2186.5px;font-size:40px;line-height:40px;color:#ffffff;letter-spacing:3.10px;-webkit-text-stroke:1.3px #ffffff;">Node optimized</div>
<svg class="b" style="left:1700px;top:2240px;" width="50" height="50" viewBox="0 0 50 50"><g fill="none" stroke="#fff" stroke-width="2.300" stroke-linecap="butt"><rect x="11.100" y="13" width="27.800" height="5.800" rx="2.900"/><rect x="11.100" y="20.100" width="27.800" height="5.800" rx="2.900"/><rect x="11.100" y="27.200" width="27.800" height="5.800" rx="2.900"/><path d="M24.800 34.200V40M11.100 42.900H21.600M28 42.900H39"/><circle cx="24.800" cy="43.200" r="3.200"/></g></svg>
<svg class="b" style="left:1877.7px;top:2240px;" width="50" height="50" viewBox="0 0 50 50"><g fill="none" stroke="#fff" stroke-width="2.300" stroke-linecap="butt"><rect x="11.100" y="13" width="27.800" height="5.800" rx="2.900"/><rect x="11.100" y="20.100" width="27.800" height="5.800" rx="2.900"/><rect x="11.100" y="27.200" width="27.800" height="5.800" rx="2.900"/><path d="M24.800 34.200V40M11.100 42.900H21.600M28 42.900H39"/><circle cx="24.800" cy="43.200" r="3.200"/></g></svg>
<div class="t" style="left:1757.4px;top:2249.6px;font-size:42px;line-height:42px;color:#ffffff;font-weight:700;">3</div>
<div class="t" style="left:1934.5px;top:2249.6px;font-size:42px;line-height:42px;color:#ffffff;font-weight:700;">2</div>
<svg class="b" style="left:1815px;top:2255px;" width="36" height="30" viewBox="0 0 36 30"><path d="M5.800 14.800H29M18.200 4.900L30 14.800 18.200 25.400" fill="none" stroke="#fff" stroke-width="2.500" stroke-linecap="butt" stroke-linejoin="miter"/></svg>
<div class="t" style="left:4478.6px;top:2155.1px;font-size:45px;line-height:45px;color:#ffdd3c;font-weight:700;letter-spacing:2.38px;">$0</div>
<div class="t" style="left:4286.8px;top:2209.1px;font-size:26px;line-height:26px;color:#646b8a;font-weight:700;letter-spacing:-0.17px;">Old price per month</div>
<svg class="b" style="left:4530px;top:2176px;" width="140" height="50" viewBox="0 0 140 50"><path d="M10.200 10.500H94L124 39.500" fill="none" stroke="#000" stroke-width="2"/></svg>
<svg class="b" style="left:4617.7px;top:2163px;" width="200" height="200" viewBox="0 0 200 200"><defs><filter id="gl" x="-30%" y="-30%" width="160%" height="160%"><feGaussianBlur stdDeviation="4.500"/></filter></defs><circle cx="100" cy="100" r="68" fill="none" stroke="#050920" stroke-width="25" filter="url(#gl)" opacity="1"/><circle cx="100" cy="100" r="68" fill="none" stroke="#fbc53d" stroke-width="16"/></svg>
<div class="t" style="left:4693.9px;top:2246.9px;font-size:27px;line-height:27px;color:#ffdd3c;font-weight:700;letter-spacing:1.36px;">0%</div>
<div class="b" style="left:4868px;top:2154px;width:50px;height:50px;background:#535a7a;border-radius:25px;"></div>
<div class="b" style="left:4884px;top:2177.5px;width:18px;height:2.5px;background:#fbc53d;"></div>
</body></html>
